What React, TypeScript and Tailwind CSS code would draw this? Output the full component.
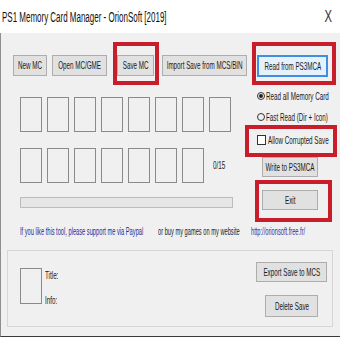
import React from 'react';

// the screenshot is squeezed horizontally, so text is drawn narrow
const N: React.FC<{ children: React.ReactNode; left?: boolean }> = ({ children, left }) => (
  <span className={left ? 'inline-block whitespace-nowrap scale-x-[0.57] origin-left' : 'inline-block whitespace-nowrap scale-x-[0.57] origin-center'}>
    {children}
  </span>
);

const Btn: React.FC<{ label: string; className: string }> = ({ label, className }) => (
  <div className={`flex shrink-0 items-center justify-center border border-[#adadad] bg-[#e1e1e1] text-[11px] text-[#1a1a1a] ${className}`}>
    <N>{label}</N>
  </div>
);

const Slot = () => <div className="h-[35px] w-[22px] shrink-0 border border-[#8a8a8a]" />;

export default function App() {
  return (
    <div className="relative h-[340px] w-[340px] overflow-hidden bg-white font-['Liberation_Sans',Arial,sans-serif]">
      {/* Title bar */}
      <div className="flex h-[33px] items-center justify-between pl-[2px] pr-[6px]">
        <div className="w-[150px] text-[14px] leading-none text-[#111]">
          <N left>PS1 Memory Card Manager - OrionSoft [2019]</N>
        </div>
        <span className="inline-block scale-x-[0.7] text-[16px] font-light leading-none text-[#333]">X</span>
      </div>

      {/* Window body */}
      <div className="flex h-[304px] flex-col border-b border-l border-[#8f8f8f] border-b-[#3a3a3a] bg-[#f0f0f0]">
        {/* Toolbar */}
        <div className="mt-[22px] flex h-[21px] pl-[12px]">
          <Btn label="New MC" className="h-[21px] w-[34px]" />
          <Btn label="Open MC/GME" className="ml-[5px] h-[21px] w-[55px]" />
          <Btn label="Save MC" className="ml-[10px] h-[21px] w-[37px]" />
          <Btn label="Import Save from MCS/BIN" className="ml-[8px] h-[21px] w-[85px]" />
          <div className="ml-[10px] flex h-[22px] w-[71px] items-center justify-center border-2 border-[#3f8ee0] bg-[#e5f1fb] text-[11px] text-[#1a1a1a]">
            <N>Read from PS3MCA</N>
          </div>
        </div>

        {/* Cards + options */}
        <div className="mt-[12px] flex">
          <div className="w-[244px] shrink-0 pl-[19px] pt-[9px]">
            <div className="flex gap-[5px]">
              {Array.from({ length: 8 }).map((_, i) => <Slot key={i} />)}
            </div>
            <div className="mt-[16px] flex items-center gap-[5px]">
              {Array.from({ length: 7 }).map((_, i) => <Slot key={i} />)}
              <div className="ml-[4px] w-[20px] text-[11px] text-[#1a1a1a]">
                <N left>0/15</N>
              </div>
            </div>
            <div className="mt-[14px] h-[11px] w-[213px] border border-[#bcbcbc] bg-[#e6e6e6]" />
          </div>

          <div className="flex flex-col pl-[12px] text-[11px] text-[#1a1a1a]">
            <div className="flex h-[16px] items-center">
              <span className="flex h-[8px] w-[8px] items-center justify-center rounded-full border border-[#333]">
                <span className="h-[4px] w-[4px] rounded-full bg-[#222]" />
              </span>
              <span className="ml-[1px] w-[70px]"><N left>Read all Memory Card</N></span>
            </div>
            <div className="mt-[5px] flex h-[16px] items-center">
              <span className="h-[8px] w-[8px] rounded-full border border-[#333]" />
              <span className="ml-[1px] w-[70px]"><N left>Fast Read (Dir + Icon)</N></span>
            </div>
            <div className="mt-[7px] flex h-[16px] items-center">
              <span className="h-[10px] w-[9px] border border-[#333] bg-white" />
              <span className="ml-[2px] w-[70px]"><N left>Allow Corrupted Save</N></span>
            </div>
            <Btn label="Write to PS3MCA" className="ml-[5px] mt-[9px] h-[20px] w-[56px]" />
            <Btn label="Exit" className="ml-[5px] mt-[13px] h-[20px] w-[56px]" />
          </div>
        </div>

        {/* Support line */}
        <div className="mt-[15px] flex h-[12px] items-center pl-[19px] text-[10px]">
          <span className="w-[138px] text-[#1e2a98]"><N left>If you like this tool, please support me via Paypal</N></span>
          <span className="w-[93px] text-[#222]"><N left>or buy my games on my website</N></span>
          <span className="w-[70px] text-[#2436a8]"><N left>http://orionsoft.free.fr/</N></span>
        </div>

        {/* Save details group */}
        <div className="ml-[6px] mt-[13px] flex h-[77px] w-[326px] border border-[#d6d6d6]">
          <div className="ml-[12px] mt-[17px] h-[36px] w-[22px] shrink-0 border border-[#8a8a8a]" />
          <div className="ml-[3px] flex flex-col text-[11px] text-[#1a1a1a]">
            <div className="mt-[18px] h-[12px] leading-[12px]"><N left>Title:</N></div>
            <div className="mt-[13px] h-[12px] leading-[12px]"><N left>Info:</N></div>
          </div>
          <div className="flex-1" />
          <div className="mr-[5px] flex w-[71px] flex-col items-center">
            <Btn label="Export Save to MCS" className="mt-[11px] h-[20px] w-[71px]" />
            <Btn label="Delete Save" className="mt-[13px] h-[22px] w-[53px]" />
          </div>
        </div>
      </div>

      {/* Red annotation boxes */}
      <div className="absolute left-[113px] top-[42px] h-[43px] w-[46px] border-4 border-[#c81d2b]" />
      <div className="absolute left-[252px] top-[42px] h-[43px] w-[84px] border-4 border-[#c81d2b]" />
      <div className="absolute left-[245px] top-[125px] h-[32px] w-[92px] border-4 border-[#c81d2b]" />
      <div className="absolute left-[255px] top-[180px] h-[42px] w-[77px] border-4 border-[#c81d2b]" />
    </div>
  );
}
